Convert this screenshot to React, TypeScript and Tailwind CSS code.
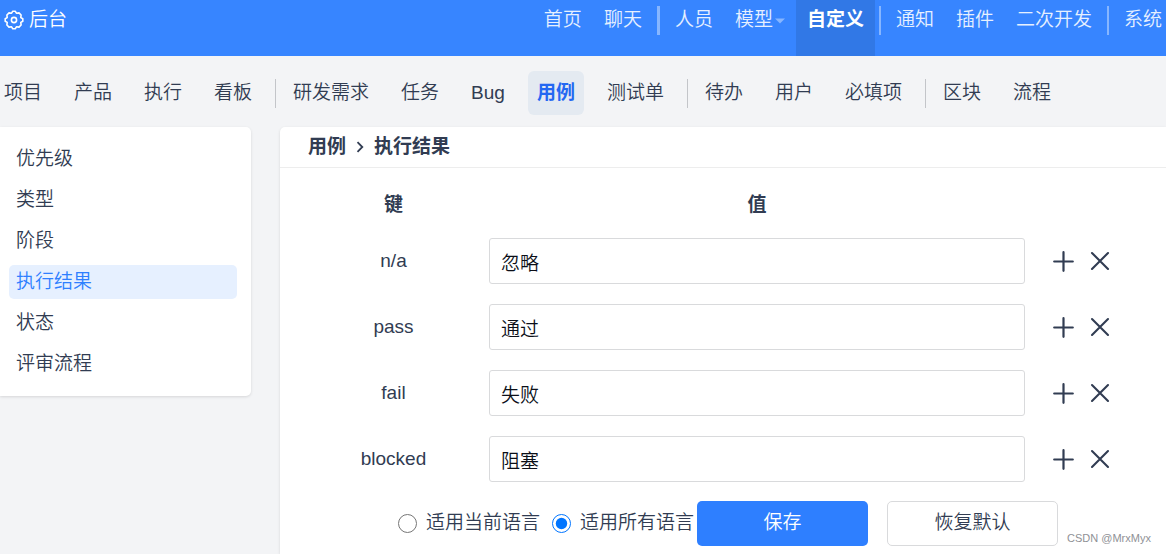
import { Fragment, useState } from "react";

type NavItem = { label: string; active?: boolean; caret?: boolean };

const mainGroups: NavItem[][] = [
  [{ label: "首页" }, { label: "聊天" }],
  [{ label: "人员" }, { label: "模型", caret: true }, { label: "自定义", active: true }],
  [{ label: "通知" }, { label: "插件" }, { label: "二次开发" }],
  [{ label: "系统" }],
];

const subGroups: NavItem[][] = [
  [{ label: "项目" }, { label: "产品" }, { label: "执行" }, { label: "看板" }],
  [
    { label: "研发需求" },
    { label: "任务" },
    { label: "Bug" },
    { label: "用例", active: true },
    { label: "测试单" },
  ],
  [{ label: "待办" }, { label: "用户" }, { label: "必填项" }],
  [{ label: "区块" }, { label: "流程" }],
];

const sideItems: NavItem[] = [
  { label: "优先级" },
  { label: "类型" },
  { label: "阶段" },
  { label: "执行结果", active: true },
  { label: "状态" },
  { label: "评审流程" },
];

const initialRows = [
  { key: "n/a", value: "忽略" },
  { key: "pass", value: "通过" },
  { key: "fail", value: "失败" },
  { key: "blocked", value: "阻塞" },
];

function GearIcon() {
  return (
    <svg viewBox="0 0 20 20" className="size-5" fill="none" stroke="currentColor" strokeWidth="1.6" strokeLinejoin="round" aria-hidden="true">
      <path d="M8.8 1.2h2.4L12.4 3.2 15 2.9 17.1 5 16.8 7.6 18.8 8.8v2.4L16.8 12.4 17.1 15 15 17.1 12.4 16.8 11.2 18.8H8.8L7.6 16.8 5 17.1 2.9 15 3.2 12.4 1.2 11.2V8.8L3.2 7.6 2.9 5 5 2.9 7.6 3.2Z" />
      <circle cx="10" cy="10" r="2.6" />
    </svg>
  );
}

function MainNav() {
  return (
    <header className="flex h-14 items-start justify-between bg-[#3785ff] text-[#e6f0ff]">
      <a href="#admin" className="flex h-10 items-center gap-[5px] pl-1 text-white">
        <GearIcon />
        后台
      </a>
      <nav className="flex pr-1 whitespace-nowrap">
        {mainGroups.map((group, i) => (
          <Fragment key={i}>
            {i > 0 && (
              <span className={`mx-1 mt-1.5 h-[29px] bg-[#87b6ff] ${i === 1 ? "w-[3px]" : "w-0.5"}`} />
            )}
            {group.map((item) => (
              <a
                key={item.label}
                href={`#${item.label}`}
                className={`h-14 pl-[11px] leading-10 ${
                  item.active ? "bg-[#3178e6] font-bold text-white" : ""
                } ${item.label === "系统" ? "" : "pr-[11px]"}`}
              >
                {item.label}
                {item.caret && (
                  <svg viewBox="0 0 10 6" className="ml-0.5 inline-block h-1.5 w-2.5 align-middle text-[#87b6ff]" fill="currentColor" aria-hidden="true">
                    <path d="M0 0.5h10L5 5.5z" />
                  </svg>
                )}
              </a>
            ))}
          </Fragment>
        ))}
      </nav>
    </header>
  );
}

function SubNav() {
  return (
    <nav className="flex items-center gap-[14px] pt-[15px] pb-3 whitespace-nowrap">
      {subGroups.map((group, i) => (
        <Fragment key={i}>
          {i > 0 && <span className="-mr-1.5 h-[29px] w-px bg-[#c3c5c9]" />}
          {group.map((item) => (
            <a
              key={item.label}
              href={`#${item.label}`}
              className={`rounded-md pr-[9px] leading-[44px] ${item.label === "项目" ? "pl-1" : "pl-[9px]"} ${
                item.active ? "bg-[#e4eaf1] font-bold text-[#2468f2]" : ""
              }`}
            >
              {item.label}
            </a>
          ))}
        </Fragment>
      ))}
    </nav>
  );
}

function SideMenu() {
  return (
    <aside className="flex w-[251px] shrink-0 flex-col gap-[7px] rounded-r-[5px] bg-white py-[15px] pr-[14px] pl-[9px] shadow-[0_1px_3px_rgba(0,0,0,0.12)]">
      {sideItems.map((item) => (
        <a
          key={item.label}
          href={`#${item.label}`}
          className={`rounded-[5px] pl-[7px] leading-[34px] ${item.active ? "bg-[#e6f0ff] text-[#2e7fff]" : ""}`}
        >
          {item.label}
        </a>
      ))}
    </aside>
  );
}

export default function App() {
  const [rows, setRows] = useState(initialRows);
  const [scope, setScope] = useState("all");

  const scopes = [
    { id: "current", label: "适用当前语言" },
    { id: "all", label: "适用所有语言" },
  ];

  return (
    <div className="flex min-h-screen flex-col bg-[#f3f4f6] font-['Liberation_Sans','Noto_Sans_CJK_SC',sans-serif] text-[19px] font-[350] text-[#313c52]">
      <MainNav />
      <SubNav />
      <div className="flex flex-1 items-start gap-[29px]">
        <SideMenu />
        <main className="min-w-0 flex-1 self-stretch rounded-tl-[5px] bg-white shadow-[0_1px_3px_rgba(0,0,0,0.12)]">
          <h1 className="flex h-[41px] items-center gap-[10px] border-b border-[#ededed] pl-7 font-bold">
            用例
            <svg viewBox="0 0 8 12" className="h-3 w-2" fill="none" stroke="currentColor" strokeWidth="1.8" aria-hidden="true">
              <path d="M1.5 1.2 6.3 6 1.5 10.8" />
            </svg>
            执行结果
          </h1>
          <form className="pt-[15px] pl-7" onSubmit={(e) => e.preventDefault()}>
            <table className="w-full table-fixed">
              <colgroup>
                <col className="w-[171px]" />
                <col />
                <col className="w-[131px]" />
              </colgroup>
              <thead>
                <tr className="h-[45px]">
                  <th className="p-0">键</th>
                  <th className="p-0">值</th>
                  <th className="p-0" aria-label="操作" />
                </tr>
              </thead>
              <tbody>
                {rows.map((row, i) => (
                  <tr key={row.key} className="h-[66px]">
                    <td className="p-0 text-center">
                      <label htmlFor={`value-${i}`}>{row.key}</label>
                    </td>
                    <td className="px-[10px] py-0">
                      <input
                        id={`value-${i}`}
                        type="text"
                        value={row.value}
                        onChange={(e) =>
                          setRows(rows.map((r, j) => (j === i ? { ...r, value: e.target.value } : r)))
                        }
                        className="block h-[46px] w-full rounded-[3px] border border-[#d9dadc] bg-white px-[11px] text-[#0b0f18]"
                      />
                    </td>
                    <td className="p-0">
                      <div className="flex items-center gap-4 pl-[18px]">
                        <button type="button" aria-label="添加">
                          <svg viewBox="0 0 21 21" className="size-[21px]" fill="none" stroke="currentColor" strokeWidth="2.2" strokeLinecap="round" aria-hidden="true">
                            <path d="M10.5 1.2v18.6M1.2 10.5h18.6" />
                          </svg>
                        </button>
                        <button type="button" aria-label="删除">
                          <svg viewBox="0 0 20 20" className="size-5" fill="none" stroke="currentColor" strokeWidth="2.1" strokeLinecap="round" aria-hidden="true">
                            <path d="M2 2l16 16M18 2 2 18" />
                          </svg>
                        </button>
                      </div>
                    </td>
                  </tr>
                ))}
              </tbody>
            </table>
            <div className="flex items-center pt-[9px] pb-2 pl-[90px] whitespace-nowrap">
              {scopes.map((s) => (
                <label key={s.id} className="mr-3 flex items-center gap-[9px] last-of-type:mr-[3px]">
                  <input
                    type="radio"
                    name="scope"
                    checked={scope === s.id}
                    onChange={() => setScope(s.id)}
                    className="size-[19px] accent-[#0075ff]"
                  />
                  {s.label}
                </label>
              ))}
              <button type="submit" className="h-[45px] w-[171px] rounded-[5px] bg-[#2e7fff] text-white">
                保存
              </button>
              <button type="button" className="ml-[19px] h-[45px] w-[171px] rounded-[5px] border border-[#d9dadc] bg-white">
                恢复默认
              </button>
              <span className="ml-[9px] self-end text-[11px] leading-4 font-normal text-[#8f9196]">
                CSDN @MrxMyx
              </span>
            </div>
          </form>
        </main>
      </div>
    </div>
  );
}
